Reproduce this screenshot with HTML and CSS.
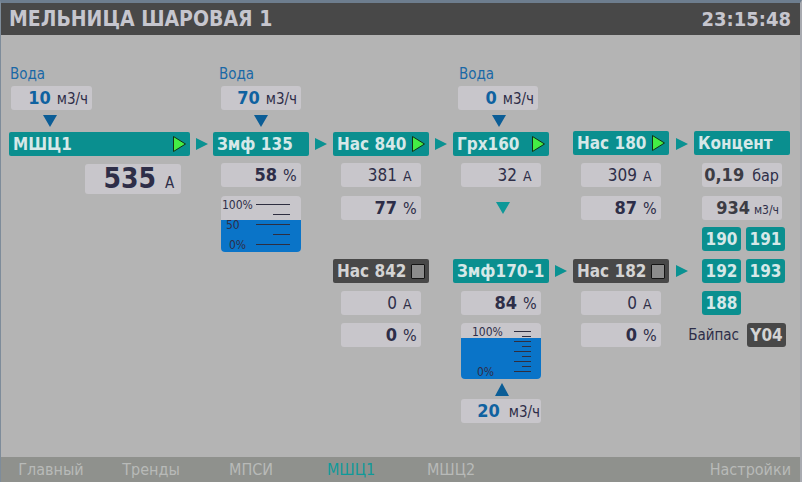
FILE: index.html
```html
<!DOCTYPE html>
<html lang="ru">
<head>
<meta charset="utf-8">
<title>МЕЛЬНИЦА ШАРОВАЯ 1</title>
<link rel="stylesheet" href="styles.css">
</head>
<body>
<div class="frame">
  <header class="topbar">
    <span class="title">МЕЛЬНИЦА ШАРОВАЯ 1</span>
    <span class="clock">23:15:48</span>
  </header>

  <main class="scheme">
    <!-- water inputs -->
    <div class="water c1 r1 w1">Вода</div>
    <div class="water c2 r1 w2">Вода</div>
    <div class="water c4 r1 w2">Вода</div>

    <div class="flow c1 r2 f1"><span class="fnum">10</span><span class="funit">м3/ч</span></div>
    <div class="flow c2 r2 f2"><span class="fnum">70</span><span class="funit">м3/ч</span></div>
    <div class="flow c4 r2 f4"><span class="fnum">0</span><span class="funit">м3/ч</span></div>

    <div class="tri-down c1 r3 t1"></div>
    <div class="tri-down c2 r3 t2"></div>
    <div class="tri-down c4 r3 t4"></div>

    <!-- main line -->
    <div class="bar wide c1 r4"><span>МШЦ1</span><svg class="play" width="13" height="16" viewBox="0 0 13 16"><polygon points="0.5,0.5 12.5,8 0.5,15.5"/></svg></div>
    <div class="arrow g1 r4"></div>
    <div class="bar c2 r4"><span>Змф 135</span></div>
    <div class="arrow g2 r4"></div>
    <div class="bar c3 r4"><span>Нас 840</span><svg class="play" width="13" height="16" viewBox="0 0 13 16"><polygon points="0.5,0.5 12.5,8 0.5,15.5"/></svg></div>
    <div class="arrow g3 r4"></div>
    <div class="bar c4 r4"><span>Грх160</span><svg class="play" width="13" height="16" viewBox="0 0 13 16"><polygon points="0.5,0.5 12.5,8 0.5,15.5"/></svg></div>
    <div class="bar c5 r4 up1"><span>Нас 180</span><svg class="play" width="13" height="16" viewBox="0 0 13 16"><polygon points="0.5,0.5 12.5,8 0.5,15.5"/></svg></div>
    <div class="arrow g5 r4 up1"></div>
    <div class="bar c6 r4 up1"><span>Концент</span></div>

    <!-- row of values 1 -->
    <div class="val big c1 r5"><span class="num b">535</span><span class="unit">A</span></div>
    <div class="val c2 r5"><span class="num b">58</span><span class="unit pct">%</span></div>
    <div class="val c3 r5"><span class="num">381</span><span class="unit">A</span></div>
    <div class="val c4 r5"><span class="num">32</span><span class="unit">A</span></div>
    <div class="val c5 r5"><span class="num">309</span><span class="unit">A</span></div>
    <div class="val c6 r5"><span class="num b grey">0,19</span><span class="unit auto">бар</span></div>

    <!-- row of values 2 -->
    <div class="tank c2 r6 span2">
      <div class="tank-fill" style="height:32px"></div>
      <svg class="scale" width="80" height="56" viewBox="0 0 80 56">
        <text x="1" y="13">100%</text>
        <line x1="35" y1="8.5" x2="69" y2="8.5"/>
        <line x1="52" y1="18.5" x2="69" y2="18.5"/>
        <text x="5" y="33">50</text>
        <line x1="35" y1="28.5" x2="69" y2="28.5"/>
        <line x1="52" y1="38.5" x2="69" y2="38.5"/>
        <text x="8" y="53">0%</text>
        <line x1="35" y1="48.5" x2="69" y2="48.5"/>
      </svg>
    </div>
    <div class="val c3 r6"><span class="num b">77</span><span class="unit pct">%</span></div>
    <div class="tri-teal c4 r6"></div>
    <div class="val c5 r6"><span class="num b">87</span><span class="unit pct">%</span></div>
    <div class="val c6 r6"><span class="num b grey tight">934</span><span class="unit auto small">м3/ч</span></div>

    <div class="tags c6 r7"><span class="tag">190</span><span class="tag">191</span></div>

    <!-- second line -->
    <div class="bar off c3 r8"><span>Нас 842</span><span class="stop"></span></div>
    <div class="bar c4 r8"><span>Змф170-1</span></div>
    <div class="arrow g4 r8"></div>
    <div class="bar off c5 r8"><span>Нас 182</span><span class="stop"></span></div>
    <div class="arrow g5 r8"></div>
    <div class="tags c6 r8"><span class="tag">192</span><span class="tag">193</span></div>

    <div class="val c3 r9"><span class="num">0</span><span class="unit">A</span></div>
    <div class="val c4 r9"><span class="num b">84</span><span class="unit pct">%</span></div>
    <div class="val c5 r9"><span class="num">0</span><span class="unit">A</span></div>
    <div class="tags c6 r9"><span class="tag">188</span></div>

    <div class="val c3 r10"><span class="num b">0</span><span class="unit pct">%</span></div>
    <div class="tank c4 r10 span2">
      <div class="tank-fill" style="height:41px"></div>
      <svg class="scale" width="80" height="56" viewBox="0 0 80 56">
        <text x="11" y="13">100%</text>
        <line x1="53" y1="8.5" x2="70" y2="8.5"/>
        <line x1="61" y1="13.5" x2="70" y2="13.5"/>
        <line x1="53" y1="18.5" x2="70" y2="18.5"/>
        <line x1="61" y1="23.5" x2="70" y2="23.5"/>
        <line x1="53" y1="28.5" x2="70" y2="28.5"/>
        <line x1="61" y1="33.5" x2="70" y2="33.5"/>
        <line x1="53" y1="38.5" x2="70" y2="38.5"/>
        <line x1="61" y1="43.5" x2="70" y2="43.5"/>
        <line x1="53" y1="48.5" x2="70" y2="48.5"/>
        <text x="16" y="53">0%</text>
      </svg>
    </div>
    <div class="val c5 r10"><span class="num b">0</span><span class="unit pct">%</span></div>
    <div class="bypass r10"><span>Байпас</span><span class="tag dark">Y04</span></div>

    <div class="tri-up c4 r12"></div>
    <div class="flow c4 r13 f5"><span class="fnum">20</span><span class="funit">м3/ч</span></div>
  </main>

  <nav class="footer">
    <span class="tab">Главный</span>
    <span class="tab">Тренды</span>
    <span class="tab">МПСИ</span>
    <span class="tab active">МШЦ1</span>
    <span class="tab">МШЦ2</span>
    <span class="settings">Настройки</span>
  </nav>
</div>
</body>
</html>
```

FILE: styles.css
```css
html, body {
  margin: 0;
  padding: 0;
}

body {
  width: 802px;
  height: 482px;
  overflow: hidden;
  background: #b4b4b4;
  font-family: "DejaVu Sans Condensed", "DejaVu Sans", sans-serif;
  color: #2e2e48;
}

.frame {
  box-sizing: border-box;
  width: 802px;
  height: 482px;
  border-top: 3px solid #6d7d8e;
  border-left: 1px solid #7e8c9a;
  border-right: 2px solid #a8aab0;
  display: flex;
  flex-direction: column;
  background: #b4b4b4;
}

/* ---------- header ---------- */
.topbar {
  height: 32px;
  flex: none;
  background: #484848;
  color: #c6c6ce;
  font-weight: bold;
  display: flex;
  align-items: center;
  justify-content: space-between;
  padding: 0 9px 0 8px;
}
.title { font-size: 21px; }
.clock { font-size: 20px; }

/* ---------- scheme grid ---------- */
.scheme {
  flex: 1;
  display: grid;
  grid-template-columns: 181px 23px 96px 24px 96px 24px 96px 24px 96px 25px 96px;
  grid-template-rows: 23px 25px 21px 31px 33px 31px 32px 32px 32px 32px 28px 16px 24px;
  align-items: start;
  justify-items: start;
  padding: 28px 0 0 8px;
}

.c1 { grid-column: 1; }
.g1 { grid-column: 2; }
.c2 { grid-column: 3; }
.g2 { grid-column: 4; }
.c3 { grid-column: 5; }
.g3 { grid-column: 6; }
.c4 { grid-column: 7; }
.g4 { grid-column: 8; }
.c5 { grid-column: 9; }
.g5 { grid-column: 10; }
.c6 { grid-column: 11; }

.r1 { grid-row: 1; }
.r2 { grid-row: 2; }
.r3 { grid-row: 3; }
.r4 { grid-row: 4; }
.r5 { grid-row: 5; }
.r6 { grid-row: 6; }
.r7 { grid-row: 7; }
.r8 { grid-row: 8; }
.r9 { grid-row: 9; }
.r10 { grid-row: 10; }
.r12 { grid-row: 12; }
.r13 { grid-row: 13; }
.r6.span2 { grid-row: 6 / span 2; }
.r10.span2 { grid-row: 10 / span 2; }

.up1 { margin-top: -1px; }

/* water label */
.water {
  font-size: 15px;
  line-height: 23px;
  color: #1a68a6;
}
.w1 { margin-left: 1px; }
.w2 { margin-left: 6px; }

/* water flow box */
.flow {
  box-sizing: border-box;
  width: 80px;
  height: 24px;
  line-height: 24px;
  background: #c8c6cb;
  border-radius: 3px;
  display: flex;
  align-items: baseline;
  justify-content: flex-end;
  padding-right: 4px;
}
.fnum {
  color: #0f62a0;
  font-weight: bold;
  font-size: 18px;
  margin-right: 6px;
}
.funit {
  font-size: 15px;
  color: #2e2e48;
}
.f1 { margin-left: 2px; width: 81px; }
.f2 { margin-left: 8px; }
.f4 { margin-left: 5px; }
.f5 { margin-left: 8px; padding-right: 1px; }
.f5 .fnum { margin-right: 9px; }

/* triangles */
.tri-down {
  width: 0;
  height: 0;
  border-left: 7px solid transparent;
  border-right: 7px solid transparent;
  border-top: 12px solid #0b5d96;
  margin-top: 4px;
}
.t1 { margin-left: 34px; }
.t2 { margin-left: 41px; }
.t4 { margin-left: 39px; }

.tri-teal {
  width: 0;
  height: 0;
  border-left: 7px solid transparent;
  border-right: 7px solid transparent;
  border-top: 12px solid #0e9898;
  margin: 6px 0 0 43px;
}

.tri-up {
  width: 0;
  height: 0;
  border-left: 7px solid transparent;
  border-right: 7px solid transparent;
  border-bottom: 13px solid #0b5d96;
  margin-left: 42px;
}

.arrow {
  justify-self: center;
  width: 0;
  height: 0;
  border-top: 6px solid transparent;
  border-bottom: 6px solid transparent;
  border-left: 12px solid #0a9292;
  margin-top: 6px;
}

/* equipment bars */
.bar {
  box-sizing: border-box;
  width: 96px;
  height: 24px;
  padding: 0 4px;
  background: #0a8f8f;
  color: #d6e8e8;
  border-radius: 2px;
  font-weight: bold;
  font-size: 17px;
  display: flex;
  align-items: center;
  justify-content: space-between;
  white-space: nowrap;
}
.bar.wide { width: 181px; }
.bar.off {
  background: #484848;
  color: #d4d4d4;
}
.play polygon {
  fill: #44ee44;
  stroke: #143014;
  stroke-width: 1;
}
.stop {
  box-sizing: border-box;
  width: 14px;
  height: 15px;
  background: #8c8c8c;
  border: 1px solid #151515;
  border-radius: 1px;
}

/* value boxes */
.val {
  box-sizing: border-box;
  width: 80px;
  height: 24px;
  line-height: 24px;
  margin-left: 8px;
  background: #c8c6cb;
  border-radius: 3px;
  display: flex;
  align-items: baseline;
  justify-content: flex-end;
  color: #2e2e48;
}
.num {
  font-size: 17px;
  margin-right: 6px;
}
.num.b {
  font-weight: bold;
  font-size: 18px;
}
.num.grey { color: #3c3c44; margin-right: 8px; }
.num.tight { margin-right: 4px; }
.unit {
  width: 18px;
  font-size: 14px;
}
.unit.pct { font-size: 16px; }
.unit.auto { width: auto; margin-right: 3px; font-size: 16px; }
.unit.small { font-size: 12px; }

.val.big {
  width: 96px;
  height: 30px;
  line-height: 30px;
  margin: 1px 0 0 76px;
}
.val.big .num {
  font-size: 28px;
  margin-right: 9px;
}
.val.big .unit {
  width: 16px;
  font-size: 15px;
}

/* tanks */
.tank {
  position: relative;
  box-sizing: border-box;
  width: 80px;
  height: 56px;
  margin-left: 8px;
  background: #c8c6cb;
  border-radius: 4px;
  overflow: hidden;
  display: flex;
  flex-direction: column;
  justify-content: flex-end;
}
.tank-fill {
  background: #0a74c8;
}
.scale {
  position: absolute;
  left: 0;
  top: 0;
}
.scale text {
  font-family: "DejaVu Sans Condensed", "DejaVu Sans", sans-serif;
  font-size: 12px;
  fill: #2e2e48;
}
.scale line {
  stroke: #2e2e40;
  stroke-width: 1;
}

/* tags */
.tags {
  display: flex;
  gap: 5px;
  margin-left: 8px;
}
.tag {
  width: 39px;
  height: 24px;
  border-radius: 3px;
  background: #0a8f8f;
  color: #d6e8e8;
  font-weight: bold;
  font-size: 17px;
  display: flex;
  align-items: center;
  justify-content: center;
}
.tag.dark {
  background: #484848;
  color: #d4d4d4;
}

.bypass {
  grid-column: 10 / span 2;
  justify-self: end;
  margin-right: 4px;
  display: flex;
  align-items: center;
  gap: 8px;
  font-size: 15px;
  color: #2e2e48;
}

/* ---------- footer ---------- */
.footer {
  height: 25px;
  flex: none;
  background: #8f918d;
  color: #b8bab8;
  font-size: 16px;
  display: flex;
  align-items: center;
}
.tab {
  width: 100px;
  text-align: center;
}
.tab.active { color: #0f9a9a; }
.settings {
  margin-left: auto;
  padding-right: 9px;
}
```
